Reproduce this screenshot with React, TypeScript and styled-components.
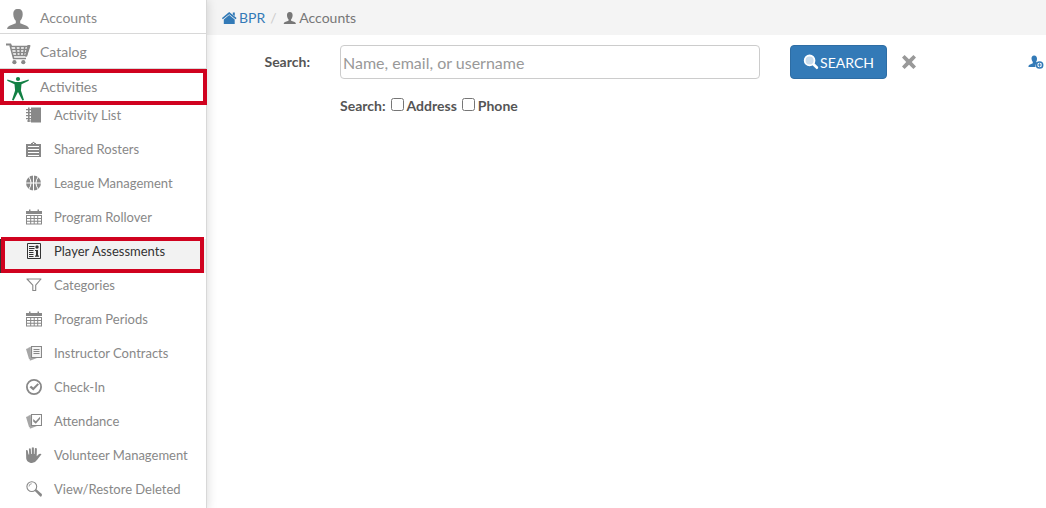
import React from 'react';
import styled, { createGlobalStyle, css } from 'styled-components';

const GlobalStyle = createGlobalStyle`
  * { box-sizing: border-box; }
  body {
    margin: 0;
    background: #fff;
    color: #555;
    font-family: Lato, "Liberation Sans", sans-serif;
    font-size: 14px;
    line-height: 20px;
  }
`;

const Page = styled.div`
  display: grid;
  grid-template-columns: 207px minmax(0, 1fr);
  min-height: 100vh;
`;

const Sidebar = styled.nav`
  z-index: 1;
  background: #fff;
  border-right: 1px solid #d8d8d8;
  box-shadow: 0 0 10px rgba(0, 0, 0, 0.16);
`;

const List = styled.ul`
  list-style: none;
  margin: 0;
  padding: 0;
`;

const Item = styled.li`
  position: relative;
`;

const SectionLink = styled.a<{ $first?: boolean }>`
  display: flex;
  align-items: center;
  gap: 8px;
  height: ${(p) => (p.$first ? 33 : 35)}px;
  padding: 2px 0 0 6px;
  color: #888;
  text-decoration: none;
  border-top: ${(p) => (p.$first ? 0 : 1)}px solid #d8d8d8;

  svg {
    width: 26px;
    height: 26px;
    margin-top: 4px;
  }
`;

const SubLink = styled.a<{ $active?: boolean }>`
  display: flex;
  align-items: flex-start;
  gap: 12px;
  height: 34px;
  padding: 4px 0 0 26px;
  font-size: 13px;
  line-height: 16px;
  color: #888;
  text-decoration: none;

  ${(p) =>
    p.$active &&
    css`
      color: #333;
      background: #f2f2f2;
      box-shadow: inset 1px 0 #333;
    `}
`;

const Callout = styled.span<{ $inset?: boolean }>`
  position: absolute;
  top: ${(p) => (p.$inset ? -2 : 1)}px;
  left: ${(p) => (p.$inset ? 1 : 0)}px;
  right: ${(p) => (p.$inset ? 2 : -1)}px;
  height: 36px;
  border: 4px solid #d0021f;
  pointer-events: none;
  z-index: 1;
`;

const Icon = styled.svg`
  display: block;
  flex: none;
  width: 16px;
  height: 16px;
`;

const Breadcrumb = styled.ol`
  display: flex;
  align-items: center;
  height: 35px;
  margin: 0;
  padding: 0 15px;
  list-style: none;
  background: #f4f4f4;
  color: #777;

  li {
    display: flex;
    align-items: center;
  }

  li + li::before {
    content: "/";
    width: 12px;
    padding-left: 5px;
    color: #ccc;
  }
`;

const CrumbLink = styled.a`
  display: flex;
  align-items: center;
  gap: 1px;
  color: #337ab7;
  text-decoration: none;
`;

const Crumb = styled.span`
  display: flex;
  align-items: center;
  gap: 1px;
`;

const SearchForm = styled.form`
  display: grid;
  grid-template-columns: 103px minmax(0, 1fr) 256px;
  column-gap: 30px;
  row-gap: 17px;
  padding-top: 10px;
  align-items: center;
`;

const FieldLabel = styled.label`
  text-align: right;
  font-weight: bold;
`;

const TextInput = styled.input`
  width: 100%;
  height: 34px;
  padding: 2px;
  border: 1px solid #ccc;
  border-radius: 4px;
  color: #555;
  font: 16px Lato, "Liberation Sans", sans-serif;

  &::placeholder {
    color: #999;
    opacity: 1;
  }
`;

const Actions = styled.div`
  display: flex;
  align-items: center;
`;

const SearchButton = styled.button`
  display: flex;
  align-items: center;
  justify-content: center;
  gap: 1px;
  width: 97px;
  height: 34px;
  padding: 0;
  border: 1px solid #2e6da4;
  border-radius: 4px;
  background: #337ab7;
  color: #fff;
  font: 14px Lato, "Liberation Sans", sans-serif;
`;

const IconButton = styled.button<{ $end?: boolean }>`
  padding: 0;
  border: 0;
  background: none;
  margin: ${(p) => (p.$end ? '0 2px 0 auto' : '0 0 0 14px')};
`;

const Options = styled.div`
  grid-column: 2 / -1;
  display: flex;
  align-items: center;
  font-weight: bold;
`;

const Option = styled.label`
  display: flex;
  align-items: center;
  gap: 3px;
  margin-left: 5px;

  input {
    width: 13px;
    height: 13px;
    margin: 0 0 3px;
  }
`;

type IconProps = { children: React.ReactNode; color?: string; box?: string };

const Glyph = ({ children, color = '#888', box = '0 0 16 16' }: IconProps) => (
  <Icon viewBox={box} fill={color} stroke="none" aria-hidden="true">
    {children}
  </Icon>
);

const Person = ({ color = '#888' }: { color?: string }) => (
  <Glyph color={color}>
    <path d="M7.8 2C5.7 2 4.9 3.3 5 5.4C5.1 7.2 5.7 8.5 6.5 9.2V10.7L3 12Q1.7 12.6 1.7 14H13.9Q13.9 12.6 12.6 12L9.1 10.7V9.2C9.9 8.5 10.5 7.2 10.6 5.4C10.7 3.3 9.9 2 7.8 2Z" />
  </Glyph>
);

const BigPerson = () => (
  <Glyph box="0 0 26 26">
    <path d="M12 2C8.5 2 7.2 4 7.3 7.4C7.4 10.2 8.5 12.5 9.8 13.7V16.2L3.5 18.7Q1.3 19.8 1 22H23Q22.7 19.8 20.5 18.7L14.2 16.2V13.7C15.5 12.5 16.6 10.2 16.7 7.4C16.8 4 15.5 2 12 2Z" />
  </Glyph>
);

const Cart = () => (
  <Glyph box="0 0 26 26">
    <path
      d="M4.3 5L7.6 17.5H20M5.3 5.5H22.5L20.3 14.5H7.5M6 8.5H22M7 11.5H21M9.8 5.5L11 14.5M14.3 5.5V14.5M18.8 5.5L17.5 14.5"
      fill="none"
      stroke="#888"
      strokeWidth="1.6"
    />
    <path d="M0 2.5H5L6.5 6H4L3.5 4.5H0ZM21.5 4H24.3V5.6L21 15.5H19Z" />
    <circle cx="8.4" cy="21.2" r="2.1" />
    <circle cx="17.3" cy="21.2" r="2.1" />
  </Glyph>
);

const Figure = () => (
  <Glyph box="0 0 26 26" color="#128044">
    <circle cx="12" cy="3" r="2.1" />
    <path d="M1.4 3.6L9.5 6H14.5L22.6 3.6L22.8 4.8L15.5 8.2L14.9 14.5L18 24L16.4 24.4L12 16L7.6 24.4L6 24L9.1 14.5L8.5 8.2L1.2 4.8Z" />
  </Glyph>
);

const Notebook = () => (
  <Glyph>
    <path d="M2 .5H3.6V15H2ZM5 .5H15V15.5H5Z" />
    <path d="M0 2H5V3.2H0ZM0 5H5V6.2H0ZM0 8H5V9.2H0ZM0 11H5V12.2H0ZM1 13.6H5V14.6H1Z" />
  </Glyph>
);

const Clipboard = () => (
  <Glyph>
    <path
      fillRule="evenodd"
      d="M0 3H5V2H6.2Q7.5 -.3 8.8 2H10V3H15V16H0ZM2 5V6H13V5ZM2 8V9H13V8ZM2 11V12H13V11ZM2 14V15H13V14ZM7 2V3H8V2Z"
    />
  </Glyph>
);

const Ball = () => (
  <Glyph>
    <circle cx="7.5" cy="8" r="7.5" />
    <path
      d="M7.5 0V16M0 8H15M2.6 1.5Q7.5 8 2.6 14.5M12.4 1.5Q7.5 8 12.4 14.5"
      fill="none"
      stroke="#fff"
      strokeWidth="1"
    />
  </Glyph>
);

const CalendarGrid = () => (
  <Glyph>
    <path
      fillRule="evenodd"
      d="M0 2H3V.5H4.5V2H11.5V.5H13V2H16V5H0ZM0 6H16V15.5H0ZM1 7V9H4.2V7ZM5.2 7V9H7.7V7ZM8.7 7V9H11.2V7ZM12.2 7V9H15V7ZM1 10V11.8H4.2V10ZM5.2 10V11.8H7.7V10ZM8.7 10V11.8H11.2V10ZM12.2 10V11.8H15V10ZM1 12.8V14.5H4.2V12.8ZM5.2 12.8V14.5H7.7V12.8ZM8.7 12.8V14.5H11.2V12.8ZM12.2 12.8V14.5H15V12.8Z"
    />
  </Glyph>
);

const Report = () => (
  <Glyph color="#333">
    <path
      d="M1.5 .5H14.5V15.5H1.5ZM3 3.5H8.5M3 5.5H8.5M3 7.5H7.5M3 9.5H7.5M3 11.5H7.5M3 13.5H7.5"
      fill="none"
      stroke="#333"
    />
    <path d="M9 7H12V12.5H13V13.8H9V12.5H10V8H9Z" />
    <circle cx="11" cy="4" r="1.7" />
  </Glyph>
);

const Funnel = () => (
  <Glyph>
    <path
      d="M1 2H15L9.7 8.2V13.5H6.8V8.2Z"
      fill="none"
      stroke="#888"
      strokeWidth="1.1"
      strokeLinejoin="round"
    />
  </Glyph>
);

const Papers = ({ checked }: { checked?: boolean }) => (
  <Glyph>
    <path d="M0 4L2.5 3L3.5 9L3.8 13.8L3 14ZM2.3 2.8L4.8 1.8L5 13H11L4.5 15.5H3.8Z" opacity=".75" />
    <path
      d={
        'M5.5 1.5H15.5V12.5H5.5Z' + (checked ? '' : 'M7.5 4.5H13.5M7.5 6.5H13.5M7.5 8.5H13.5')
      }
      fill={checked ? '#fff' : '#f4f4f4'}
      stroke="#888"
      strokeWidth="1.1"
    />
    {checked && <path d="M7.2 6L9.8 8.2L14 3.7V6L9.8 10.7L7.2 8.4Z" />}
  </Glyph>
);

const CheckCircle = () => (
  <Glyph>
    <circle cx="8" cy="8" r="7.1" fill="none" stroke="#888" strokeWidth="1.8" />
    <path d="M3.5 8.2L5.2 6.7L7.3 8.5L11.6 4.2L13 5.6L7.3 11.6Z" />
  </Glyph>
);

const Hand = () => (
  <Glyph>
    <path d="M0 3.2Q1.5 2.5 1.8 4L2.5 7.5H3.2L2.9 1.7Q4.2 .6 4.8 2L5.1 7H5.8V.8Q7 -.4 7.9 .8V7H8.5L8.9 1.3Q10.1 .4 10.9 1.6L10.7 9.2L13 6.9Q15 6.2 15.5 7.3L11.2 12.7Q9 16 6 16C2.5 16 .2 13.5 .2 11Z" />
  </Glyph>
);

const Magnifier = () => (
  <Glyph>
    <circle cx="5.8" cy="5.6" r="4.9" fill="none" stroke="#888" strokeWidth="1.1" />
    <path d="M3 5.5Q3 2.9 5.7 2.7" fill="none" stroke="#888" strokeWidth=".8" />
    <path d="M8.6 9.8L10.4 8.2L15.8 13Q16.4 15 14.5 15.8Z" />
  </Glyph>
);

const House = () => (
  <Glyph color="#337ab7">
    <path d="M7.2 2L14.6 8L13.6 9.2L7.2 4.2L.8 9.2L-.1 8ZM7.2 5L12.7 9.4V14H1.8V9.4ZM10.8 2.4H12.8V6L10.8 4.4Z" />
  </Glyph>
);

const SearchGlyph = () => (
  <Glyph color="#fff">
    <circle cx="6.6" cy="6.4" r="4.9" fill="#c9dced" stroke="#fff" strokeWidth="1.8" />
    <path d="M9.2 11L11.2 9L15.2 13Q15.6 14.8 13.7 15.2Z" />
  </Glyph>
);

const Cross = () => (
  <Glyph color="#999">
    <path d="M3.6 1L8 5.2L12.4 1L15 3.6L10.8 8L15 12.4L12.4 15L8 10.8L3.6 15L1 12.4L5.2 8L1 3.6Z" />
  </Glyph>
);

const PersonAdd = () => (
  <Glyph color="#337ab7">
    <path d="M6.2 1.4C4.2 1.4 3.4 2.7 3.5 4.6C3.6 6.2 4.2 7.3 4.8 7.9V9.3L1.5 10.7Q.4 11.3 .4 13H7.5Q7 10 9.4 8.7L8 8.1C8.6 7.4 9 6.4 9 4.6C9 2.7 8.1 1.4 6.2 1.4Z" />
    <circle cx="11.6" cy="11" r="3.1" fill="#fff" stroke="#337ab7" strokeWidth="1.5" />
    <path d="M11.1 9.2H12.1V10.5H13.4V11.5H12.1V12.8H11.1V11.5H9.8V10.5H11.1Z" />
  </Glyph>
);

const activities = [
  { label: 'Activity List', icon: <Notebook /> },
  { label: 'Shared Rosters', icon: <Clipboard /> },
  { label: 'League Management', icon: <Ball /> },
  { label: 'Program Rollover', icon: <CalendarGrid /> },
  { label: 'Player Assessments', icon: <Report />, active: true },
  { label: 'Categories', icon: <Funnel /> },
  { label: 'Program Periods', icon: <CalendarGrid /> },
  { label: 'Instructor Contracts', icon: <Papers /> },
  { label: 'Check-In', icon: <CheckCircle /> },
  { label: 'Attendance', icon: <Papers checked /> },
  { label: 'Volunteer Management', icon: <Hand /> },
  { label: 'View/Restore Deleted', icon: <Magnifier /> },
];

export default function App() {
  return (
    <Page>
      <GlobalStyle />
      <Sidebar>
        <List>
          <Item>
            <SectionLink href="#accounts" $first>
              <BigPerson />
              Accounts
            </SectionLink>
          </Item>
          <Item>
            <SectionLink href="#catalog">
              <Cart />
              Catalog
            </SectionLink>
          </Item>
          <Item>
            <SectionLink href="#activities">
              <Figure />
              Activities
            </SectionLink>
            <Callout />
            <List>
              {activities.map((a) => (
                <Item key={a.label}>
                  <SubLink href="#activities" $active={a.active}>
                    {a.icon}
                    {a.label}
                  </SubLink>
                  {a.active && <Callout $inset />}
                </Item>
              ))}
            </List>
          </Item>
        </List>
      </Sidebar>
      <main>
        <Breadcrumb>
          <li>
            <CrumbLink href="#home">
              <House />
              BPR
            </CrumbLink>
          </li>
          <li>
            <Crumb>
              <Person color="#777" />
              Accounts
            </Crumb>
          </li>
        </Breadcrumb>
        <SearchForm onSubmit={(e) => e.preventDefault()}>
          <FieldLabel htmlFor="query">Search:</FieldLabel>
          <TextInput id="query" type="text" placeholder="Name, email, or username" />
          <Actions>
            <SearchButton type="submit">
              <SearchGlyph />
              SEARCH
            </SearchButton>
            <IconButton type="reset" aria-label="Clear">
              <Cross />
            </IconButton>
            <IconButton type="button" aria-label="Add account" $end>
              <PersonAdd />
            </IconButton>
          </Actions>
          <Options>
            Search:
            <Option>
              <input type="checkbox" />
              Address
            </Option>
            <Option>
              <input type="checkbox" />
              Phone
            </Option>
          </Options>
        </SearchForm>
      </main>
    </Page>
  );
}
